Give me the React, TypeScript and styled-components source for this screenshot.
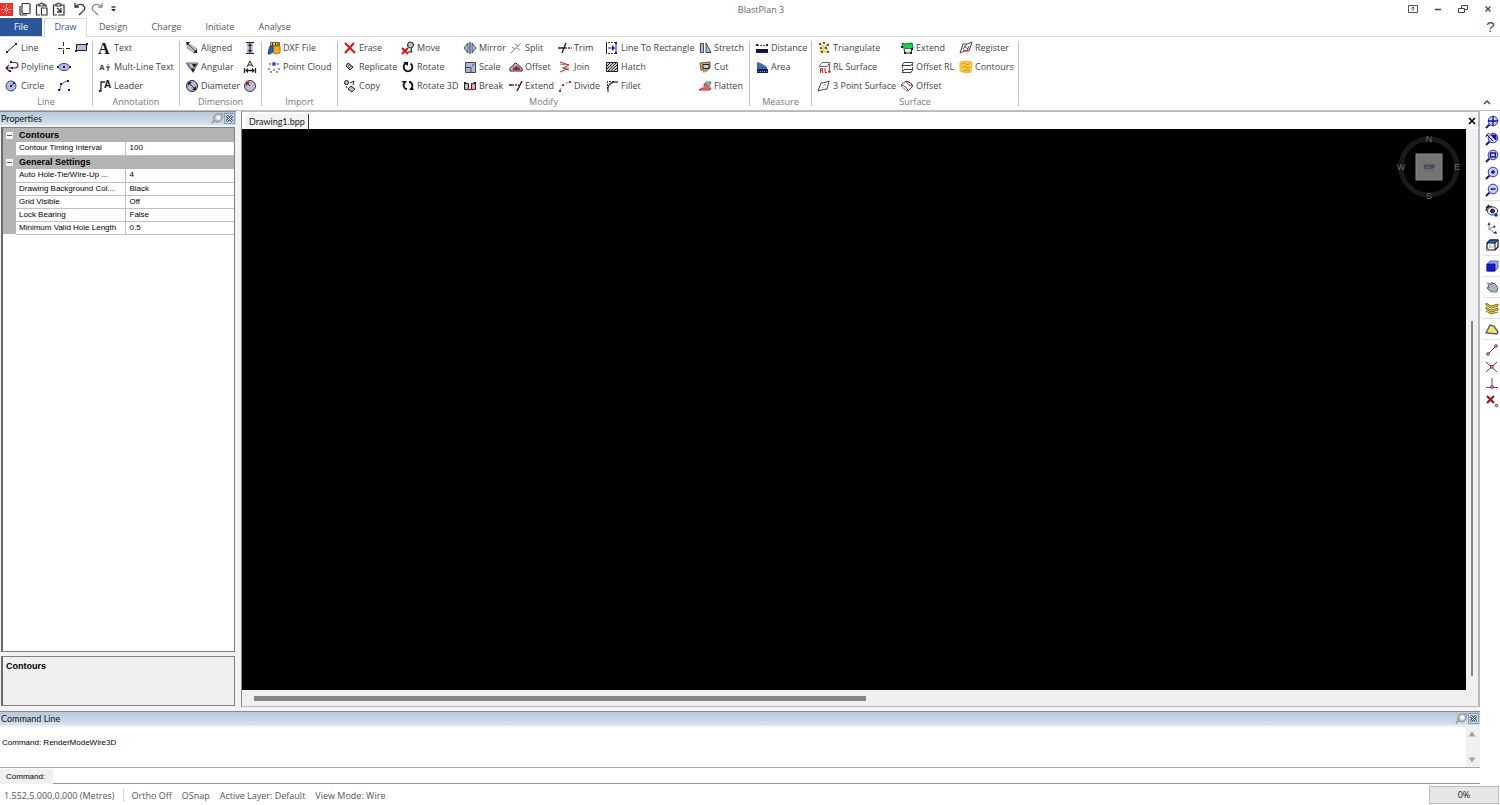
import React from 'react';
import styled, { createGlobalStyle, css } from 'styled-components';

const uiFont = '"Open Sans", "Noto Sans", sans-serif';
const captionFont = 'Lato, "Liberation Sans", sans-serif';
const classicFont = '"Liberation Sans", sans-serif';

const GlobalStyle = createGlobalStyle`
  *, *::before, *::after { box-sizing: border-box; }
  body { margin: 0; background: #fff; font-family: ${uiFont}; font-size: 9px; color: #444; }
  button, input { font: inherit; color: inherit; }
`;

const plainButton = css`
  background: none;
  border: 0;
  padding: 0;
  margin: 0;
`;

const Window = styled.div`
  display: flex;
  flex-direction: column;
  min-height: 100vh;
`;

const TitleBar = styled.header`
  display: flex;
  align-items: center;
  height: 18px;
`;

const QuickTools = styled.div`
  display: flex;
  flex: 1;
  align-items: center;
`;

const QuickButton = styled.button`
  ${plainButton}
  display: grid;
  place-items: center;
  width: 17px;
  height: 18px;
`;

const LogoBox = styled.span`
  display: flex;
  width: 16px;
`;

const UndoGroup = styled.div`
  display: flex;
  margin-left: 4px;
`;

const AppTitle = styled.h1`
  margin: 0 0 0 22px;
  font-size: 9px;
  font-weight: 400;
  color: #666;
`;

const WindowButtons = styled.div`
  display: flex;
  flex: 1;
  justify-content: flex-end;
`;

const WindowButton = styled.button`
  ${plainButton}
  display: grid;
  place-items: center;
  width: 25px;
  height: 18px;
`;

const TabRow = styled.nav`
  display: flex;
  height: 18px;
  line-height: 18px;
`;

const FileTab = styled.button`
  ${plainButton}
  width: 42px;
  margin-right: 2px;
  background: #2b579a;
  color: #fff;
`;

const RibbonTab = styled.button<{ $active?: boolean }>`
  ${plainButton}
  height: ${(p) => (p.$active ? '19px' : '18px')};
  width: ${(p) => (p.$active ? '43px' : 'auto')};
  padding: ${(p) => (p.$active ? '0 0 2px' : '0 12px')};
  border: ${(p) => (p.$active ? '1px solid #dadada' : '0')};
  border-bottom: 0;
  background: #fff;
  color: ${(p) => (p.$active ? '#2b579a' : '#555')};
  line-height: ${(p) => (p.$active ? '16px' : '18px')};
  z-index: 1;
`;

const HelpButton = styled.button`
  ${plainButton}
  width: 19px;
  margin-left: auto;
  font-family: ${classicFont};
  font-size: 15px;
  line-height: 18px;
`;

const Ribbon = styled.section`
  display: flex;
  height: 75px;
  padding-top: 1px;
  border-top: 1px solid #dadada;
  border-bottom: 1px solid #c0c0c0;
`;

const Group = styled.div`
  display: flex;
  flex-direction: column;
  flex: none;
  padding-left: 5px;
`;

const GroupGrid = styled.div<{ $columns: string }>`
  display: grid;
  grid-template-columns: ${(p) => p.$columns};
  grid-template-rows: repeat(3, 19px);
  grid-auto-flow: column;
`;

const GroupName = styled.div`
  margin-left: -5px;
  line-height: 13px;
  text-align: center;
  color: #777;
`;

const Divider = styled.i`
  width: 1px;
  height: 65px;
  margin-top: 3px;
  background: #b4c6e0;
`;

const Command = styled.button`
  ${plainButton}
  display: flex;
  align-items: center;
  gap: 2px;
  white-space: nowrap;
  text-align: left;
`;

const CollapseButton = styled.button`
  ${plainButton}
  align-self: flex-end;
  margin-left: auto;
  width: 26px;
  height: 15px;
`;

const Body = styled.div`
  display: flex;
  flex: 1;
`;

const Desk = styled.div`
  display: flex;
  flex: 1;
  flex-direction: column;
  min-width: 0;
`;

const Workspace = styled.main`
  display: flex;
  flex: 1;
  gap: 5px;
  padding-bottom: 4px;
  background: #f3f3f3;
`;

const Properties = styled.aside`
  display: flex;
  flex-direction: column;
  width: 236px;
  color: #000;
`;

const PaneHeader = styled.div`
  display: flex;
  align-items: center;
  height: 14px;
  padding-left: 1px;
  border-top: 1px solid #8a8a8a;
  background: linear-gradient(#b9c9d8, #d5e1f0);
  font-family: ${captionFont};
  line-height: 12px;
  color: #111;
`;

const PaneTitle = styled.h2`
  flex: 1;
  margin: 0;
  font-size: 9px;
  font-weight: 400;
`;

const PaneButton = styled.button`
  ${plainButton}
  display: grid;
  place-items: center;
  width: 13px;
  height: 13px;
`;

const GridFrame = styled.div`
  flex: 1;
  margin: 2px 1px 4px 1px;
  border: 1px solid #808080;
  border-left: 2px solid #696969;
  background: #fff;
`;

const PropertyTable = styled.table`
  width: 100%;
  border-collapse: collapse;
  table-layout: fixed;
  font-family: ${classicFont};
  font-size: 8px;
  line-height: 12px;
`;

const Gutter = styled.td`
  width: 13px;
  padding: 0;
  background: #b4b4b4;
  vertical-align: middle;
`;

const Category = styled.th`
  height: 14px;
  padding: 0 3px;
  background: #b4b4b4;
  font-size: 9px;
  text-align: left;
`;

const PropertyName = styled.th`
  height: 13px;
  padding: 0 0 0 3px;
  border-right: 1px solid #c0c0c0;
  border-bottom: 1px solid #c0c0c0;
  font-weight: 400;
  text-align: left;
  white-space: nowrap;
`;

const PropertyValue = styled.td`
  padding: 0 4px;
  border-bottom: 1px solid #c0c0c0;
`;

const ExpandButton = styled.button`
  ${plainButton}
  display: block;
  width: 7px;
  height: 7px;
  margin-left: 3px;
  background: linear-gradient(#3a5a9a, #3a5a9a) center / 5px 1px no-repeat #f4f4f4;
`;

const Description = styled.div`
  height: 50px;
  margin: 0 1px 1px;
  padding: 4px 3px;
  border: 1px solid #808080;
  border-left: 2px solid #696969;
  background: #f0f0f0;
  font-family: ${classicFont};
  font-weight: 700;
`;

const Document = styled.section`
  display: flex;
  flex: 1;
  flex-direction: column;
  min-width: 0;
  border: 1px solid #b8b8b8;
  border-right-width: 2px;
  border-left: 1px solid #888;
  background: #fff;
`;

const DocumentTabs = styled.div`
  display: flex;
  align-items: flex-end;
  height: 17px;
  padding-left: 4px;
`;

const DocumentTab = styled.button`
  ${plainButton}
  height: 15px;
  padding: 0 3px;
  border-right: 1px solid #333;
  background: #f3f3f3;
  font-family: ${captionFont};
  color: #222;
`;

const DocumentClose = styled.button`
  ${plainButton}
  display: grid;
  place-items: center;
  width: 12px;
  height: 17px;
  margin-left: auto;
`;

const CanvasRow = styled.div`
  display: flex;
  flex: 1;
`;

const Canvas = styled.div`
  position: relative;
  flex: 1;
  background: #000;
`;

const Compass = styled.svg`
  position: absolute;
  top: 4px;
  right: 4px;
`;

const VerticalBar = styled.div`
  display: grid;
  grid-template-rows: 342fr 633fr 25fr;
  width: 12px;
  background: #f0f0f0;
`;

const VerticalThumb = styled.i`
  grid-row: 2;
  justify-self: center;
  width: 2px;
  background: #858585;
`;

const HorizontalBar = styled.div`
  display: grid;
  grid-template-columns: 10fr 495fr 495fr;
  height: 16px;
  background: #f0f0f0;
`;

const HorizontalThumb = styled.i`
  grid-column: 2;
  align-self: center;
  height: 5px;
  background: #858585;
`;

const CommandPane = styled.section`
  font-family: ${classicFont};
  color: #000;
`;

const Output = styled.div`
  display: flex;
  height: 43px;
  border-top: 2px solid #f0f0f0;
  border-bottom: 1px solid #a8a8a8;
`;

const OutputText = styled.p`
  flex: 1;
  margin: 0;
  padding: 10px 2px;
  font-size: 8px;
  line-height: 12px;
`;

const OutputScroll = styled.div`
  display: flex;
  flex-direction: column;
  justify-content: space-between;
  width: 14px;
  background: #f0f0f0;
`;

const ArrowButton = styled.button`
  ${plainButton}
  display: grid;
  place-items: center;
  width: 12px;
  height: 14px;
`;

const Prompt = styled.div`
  display: flex;
  height: 15px;
  margin: 1px 0;
  font-size: 8px;
  line-height: 15px;
`;

const PromptLabel = styled.label`
  width: 53px;
  padding-left: 6px;
  background: #f0f0f0;
`;

const PromptInput = styled.input`
  flex: 1;
  min-width: 0;
  border: 0;
  border-bottom: 1px solid #999;
  padding: 0 4px;
  background: #fff;
  outline: 0;
`;

const SideTools = styled.aside`
  display: flex;
  flex-direction: column;
  width: 20px;
  padding: 2px 0 0 3px;
`;

const SideSet = styled.div`
  display: flex;
  flex-direction: column;

  & + & {
    margin-top: 2px;
    padding-top: 1px;
    border-top: 1px solid #e2e2e2;
  }
`;

const SideButton = styled.button`
  ${plainButton}
  display: grid;
  place-items: center;
  height: 17px;
`;

const StatusBar = styled.footer`
  display: flex;
  align-items: center;
  height: 20px;
  padding: 0 1px 0 4px;
  color: #555;
`;

const StatusItem = styled.span<{ $divided?: boolean }>`
  padding-right: ${(p) => (p.$divided ? '8px' : '0')};
  margin-right: ${(p) => (p.$divided ? '8px' : '10px')};
  border-right: ${(p) => (p.$divided ? '1px solid #d4d4d4' : '0')};
`;

const Progress = styled.div`
  width: 70px;
  height: 18px;
  margin-left: auto;
  border: 1px solid #bcbcbc;
  background: #e6e6e6;
  line-height: 16px;
  text-align: center;
  color: #222;
`;

const K = '#222';
const B = '#1212c8';
const F = '#b4bedb';
const R = '#d42020';

const Dots = ({ at, c = B }: { at: number[][]; c?: string }) => (
  <>
    {at.map(([x, y]) => (
      <rect key={`${x}-${y}`} x={x - 1} y={y - 1} width="2" height="2" fill={c} stroke="none" />
    ))}
  </>
);

const Lens = () => (
  <>
    <path d="M1 13 4.500 9.500" stroke="#12129a" strokeWidth="2" />
    <circle cx="8" cy="6" r="4.800" fill="#c5cff0" stroke="#3a3aa8" />
  </>
);

const art: Record<string, React.ReactNode> = {
  line: <><path d="M2 11 11 3" stroke={K} /><Dots at={[[2, 11], [11, 3]]} /></>,
  polyline: <><path d="M6 2.500h4q3 0 3 2.500t-3 3H2" stroke="#7a2730" strokeWidth="1.200" /><path d="m4 5-3 3 3 3" stroke="#7a2730" strokeWidth="1.200" /><Dots at={[[6, 2], [2, 8], [7, 8], [5, 11]]} /></>,
  circle: <><circle cx="6" cy="7" r="5" fill={F} stroke="#445" /><path d="m6 7 3-3" stroke={K} /><Dots at={[[6, 7], [9, 4]]} /></>,
  point: <path d="M6.500 1v4M6.500 9v4M1 7.500h4M9 7.500h4M6.500 7v1" stroke={K} />,
  rectangle: <><path d="M1.500 3.500h10v6h-10z" fill={F} stroke={K} /><Dots at={[[1, 10], [12, 3]]} /></>,
  ellipse: <><ellipse cx="7" cy="7" rx="5.500" ry="3.500" fill={F} stroke="#446" /><Dots at={[[7, 7], [1, 7], [13, 7]]} /></>,
  arc: <><path d="M3 11Q3 4 10 2" stroke="#555" /><Dots at={[[2, 11], [4, 5], [11, 2], [12, 11]]} /></>,
  text: <text x="0" y="12.500" fontFamily="Liberation Serif, serif" fontWeight="700" fontSize="16" fill="#111">A</text>,
  mtext: <><text x="1" y="10" fontFamily="Liberation Sans, sans-serif" fontWeight="700" fontSize="8" fill="#333">A</text><path d="M10 4v1M10 6v5M8 7h4" stroke={K} /></>,
  leader: <><text x="6" y="9" fontFamily="Liberation Sans, sans-serif" fontWeight="700" fontSize="10" fill="#111">A</text><path d="M1 12h2V3h4M1.500 11v2" stroke={K} strokeWidth="1.300" /></>,
  aligned: <><path d="m4 3 8 5-2 4-8-5z" fill={F} stroke="#99a" /><path d="m3 3 8 8" stroke="#555" /><path d="M1 1h4L2 5zM12 12H8l4-4z" fill={K} stroke="none" /></>,
  angular: <><path d="M1 3h12L8 12z" fill={F} stroke="#666" /><path d="M3 4q1 4 5 6" stroke="#555" /><path d="M7 4h5L9 8zM6 8l4 1-2 4z" fill={K} stroke="none" /></>,
  diameter: <><circle cx="7" cy="7" r="5.500" fill={F} stroke={K} /><path d="m4 4 6 6" stroke={K} /><path d="M3 3h4L3 7zM11 11H7l4-4z" fill={K} stroke="none" /></>,
  vertical: <><path d="M4 2h6v10H4z" fill={F} stroke="none" /><path d="M3 1.500h8M3 12.500h8M7 3v8" stroke={K} /><path d="m7 2 2 3H5zM7 12 5 9h4z" fill={K} stroke="none" /></>,
  baseline: <><path d="m4 7 3-6 3 6M5 5h4" stroke={K} /><path d="M1.500 8v5M12.500 8v5M4 10.500h6" stroke={K} strokeWidth="1.300" /><path d="m2 10.500 3-2.500v5zM12 10.500l-3-2.500v5z" fill={K} stroke="none" /></>,
  radius: <><circle cx="7" cy="7" r="5.500" fill={F} stroke="#6b2b30" /><path d="m7 7-3-3" stroke={K} /><path d="M3 3h4L3 7z" fill="#822" stroke="none" /></>,
  dxf: <><path d="M6 5h7v7l-6 1z" fill="#f0a81f" stroke="#b97b14" /><path d="M3.500 1.500h9v3h-9z" fill="#ffd24a" stroke="#8c651d" /><path d="M5 3h1M8 3h1M10.500 3h1" stroke={K} strokeWidth="2" /><path d="M3 5h3v6l-3 2H1l1-5z" fill="#2764ad" stroke="#23497a" /></>,
  cloud: <><Dots c="#999ca8" at={[[3, 4], [11, 4], [2, 9], [12, 9], [4, 12], [10, 12], [7, 10]]} /><circle cx="7" cy="4" r="2" fill="#3b4ed8" stroke="none" /></>,
  erase: <path d="m2 2 10 10M11 2 2 12" stroke="#e21010" strokeWidth="2" />,
  replicate: <><path d="m5 3 5 4-3 3-4-4z" fill={F} stroke={K} /><circle cx="6.500" cy="6.500" r="1" fill="#fff" stroke="#556" /></>,
  copy: <><circle cx="3.500" cy="3.500" r="2" fill={F} stroke={K} /><path d="m8 7 4 3-3 3-4-3z" fill={F} stroke={K} /><path d="m3 7 1 2M7 4l4-2-1 4" stroke={K} /></>,
  move: <><circle cx="9.500" cy="4" r="3" fill={F} stroke={K} /><path d="m10 7 1 4H7" fill={F} stroke={K} /><path d="m1 7 6 6M7 7l-6 6" stroke="#e21010" strokeWidth="2" /></>,
  rotate: <><path d="M4.500 3.500a4.300 4.300 0 1 0 5 0" stroke="#111" strokeWidth="1.800" /><path d="M2 2h5v4z" fill="#111" stroke="none" /></>,
  rotate3d: <><path d="M6 10Q2.500 10 2.500 5M8 3q3.500 0 3.500 5" stroke="#111" strokeWidth="1.800" /><path d="M1 2h5L3 6zM13 11H8l3-4z" fill="#111" stroke="none" /></>,
  mirror: <><path d="M5 2v10L1 7zM9 2v10l4-5z" fill={F} stroke="#446" /><path d="M7 1v12" stroke="#1f5e7c" strokeWidth="1.400" /></>,
  scale: <><path d="M2.500 2.500h10v10h-10z" fill="#a9b6d9" stroke="#445" /><path d="M3 7.500h5V12M9 6l2-2" stroke="#445" /></>,
  break: <><path d="M1.500 4.500h4v6h-4zM8.500 4.500h4v6h-4z" fill={F} stroke={K} /><path d="M4 4.500h1.500M8.500 4.500H10M4 10.500h6" stroke={R} strokeWidth="1.300" /><Dots at={[[2, 4], [12, 4]]} c={K} /></>,
  split: <><path d="m2 12 10-10" stroke="#888" /><path d="m3 6 3 2M8 7l3 2M6 3l3 2" stroke="#e06060" /></>,
  offset: <><path d="M1 11q-1-4 3-5 2-6 6 0 4 1 3 5z" fill={F} stroke="#3d2025" /><path d="M4 9.500q0-2 2-2 1-3 3 0 2 0 2 2z" fill="#444" stroke={R} /></>,
  extend: <><path d="M3 6h7" stroke="#a01818" strokeWidth="1.600" strokeDasharray="2 1" /><path d="M0 6h3M8 12l5-10" stroke={K} strokeWidth="1.400" /></>,
  trim: <><path d="M0 7h7M4 12 8 2" stroke={K} strokeWidth="1.400" /><path d="M7 7h7" stroke="#a01818" strokeWidth="1.600" strokeDasharray="2 1" /></>,
  join: <><path d="m2 2 9 3-6 3 6 2M2 12l7-3" stroke={R} /><path d="m2 4 7 1M4 8h7" stroke="#777" /></>,
  divide: <><path d="M2 12Q3 5 12 3" stroke="#d66" strokeDasharray="3 2" /><Dots c={R} at={[[2, 12], [5, 6], [12, 3]]} /></>,
  toRectangle: <><path d="M1.500 1v12" stroke={K} /><path d="M3 1.500h8M3 12.500h8" stroke="#445" strokeDasharray="2 1" /><path d="M3 7h6M11 1v12" stroke={B} /><path d="M7 4v6l3-3z" fill={B} stroke="none" /><Dots at={[[11, 2], [11, 12]]} /></>,
  hatch: <><path d="M1.500 2.500h11v9h-11z" fill="#ccc" stroke={K} /><path d="m2 6 4-4M2 9l7-7M3 11l9-9M6 11l6-6M9 11l3-3" stroke={K} /></>,
  fillet: <><path d="M3 13V9Q4 4 9 3h4" stroke="#445" strokeWidth="1.300" /><path d="M2.500 10V2.500H9" stroke={K} strokeDasharray="2 1" /></>,
  stretch: <path d="M2.500 2.500h3v9h-3zM8 2l5 9.500H8z" fill={F} stroke="#446" />,
  cut: <><path d="m2 3 10-1v6l-4 3-5-1z" fill="#e0a04e" stroke="#755" /><path d="M5 4.500h6v4H5z" fill="#ccd" stroke={K} /><path d="m5 12 5-2" stroke="#a99" strokeWidth="2" /></>,
  flatten: <><path d="m6 5 2-2h5l-2 5H6z" fill="#aaa" stroke="#777" /><path d="M1 11h11l1-2H4z" fill="#d99" stroke={R} /><path d="M6 6h4" stroke={R} /></>,
  distance: <><path d="M1 8h12v4H1z" fill="#101050" stroke="none" /><path d="M1 11.500h12" stroke={B} /><path d="M2 4.500h10" stroke={R} strokeDasharray="2 1" /><Dots c={K} at={[[2, 4], [12, 4]]} /></>,
  area: <><path d="M2 2q3 0 10 5v2H2z" fill="#3e6ba5" stroke="none" /><path d="M2 9h11v4H2z" fill="#15156e" stroke="none" /><path d="M3 11.500h9" stroke="#8c9ade" strokeDasharray="1 1" /></>,
  triangulate: <><path d="m3 3 5 3 4-4M4 10l4-4 3 5z" stroke="#e8d24a" strokeWidth="1.800" /><Dots c="#555" at={[[3, 3], [7, 2], [11, 4], [4, 7], [9, 7], [11, 11], [5, 11]]} /></>,
  rl: <><path d="M5 2.500h8l-3 4H2z" stroke="#666" /><path d="M3.500 13V8.500h2v2h-2M5 10.500l1 2.500M8 8v4.500h2M12.500 4v9M11 11l1.500 2 1-2" stroke={R} /></>,
  threePoint: <><path d="m1 12 3-8q4 0 8-2l-2 8q-3 0-9 2z" stroke="#444" /><path d="m5 9 3-4 1 3" stroke="#e06060" strokeDasharray="1 1" /></>,
  surfaceExtend: <><path d="m2 2 3 1 7-1 1 5-3 1-7-1z" fill="#20cf50" stroke="#087832" /><path d="m4 8 1 4h6l1-4" fill="#e4f2e5" stroke={K} /><Dots c={K} at={[[2, 6], [12, 8], [5, 12], [11, 12]]} /></>,
  offsetRl: <><path d="M4 2.500h9l-2 3H2zM4 9.500h9l-2 3H2z" stroke="#444" /><path d="M2.500 6v6M12.500 4v6" stroke={R} strokeDasharray="2 1" /></>,
  surfaceOffset: <><path d="m1 6 5-4q5 1 7 5l-5 5q-1-5-7-6zM6 2q2 5 7 5" stroke="#444" /><path d="m1 7 7 6M8 2l5 4" stroke={R} strokeDasharray="2 1" /></>,
  register: <><path d="m1 12 3-9q4 1 9-2l-3 9q-4-1-9 2z" stroke="#444" /><path d="m4 9 4 1 2-5" stroke={R} /><path d="m5 5 4 3M4 8l4-5" stroke="#4444c8" /></>,
  contours: <><path d="m1 2 6-1 6 1-1 10-5 1-6-2z" fill="#f6cf3e" stroke="#edbd2c" /><path d="M3 4q2-2 4 0t4-1M3 8q2-3 4-1t4 0M4 11q3-2 7 0" stroke="#e48a1a" /></>,
  zoomAll: <><Lens /><path d="M8 1v10M3 6h10" stroke="#12129a" strokeWidth="1.300" /></>,
  zoomPrevious: <><Lens /><path d="M6 3h5v5z" fill="#12129a" stroke="#12129a" /><path d="m2 3 6 6M1 5q0-3 3-4" stroke="#12129a" /></>,
  zoomWindow: <><Lens /><path d="M5.500 4h5v4h-5z" stroke="#12129a" strokeWidth="1.300" /></>,
  zoomIn: <><Lens /><path d="M8 4v4M6 6h4" stroke="#12129a" strokeWidth="1.500" /></>,
  zoomOut: <><Lens /><path d="M5.500 6h5" stroke="#12129a" strokeWidth="1.500" /></>,
  orbit: <><path d="M1 7Q2 2 7 2.500M4 1 1 4" stroke={K} strokeWidth="1.200" /><ellipse cx="7.500" cy="7" rx="5" ry="4" fill="#fff" stroke="#333" /><circle cx="7.500" cy="7" r="2" fill="#1637a8" stroke="#113" /><circle cx="11" cy="11" r="1.800" fill="#1637a8" /></>,
  axes: <><path d="M4 3v5l6 4M4 8l4-2" stroke="#888" /><path d="m2.500 4 1.500-3 1.500 3zM8 7l1-3 2 2zM8 12l3-2 1 3z" fill="#252590" stroke="none" /></>,
  wireCube: <><path d="m2 5 3-3h8v7l-3 3H2z" fill="#fff" stroke="#111" strokeWidth="1.200" /><path d="m2 5 3-3h8l-3 3z" fill="#1672d8" stroke="#111" /><path d="M10 5v7" stroke="#111" /><path d="M5 5v4L2 12M5 9h5" stroke="#aac" /></>,
  solidCube: <><path d="m2 5 3-3h8v7l-3 3H2z" fill="#9aaaf0" stroke="#5568d0" /><path d="M2 5h8v7H2z" fill="#1717cf" stroke="#1515a0" /></>,
  hand: <><path d="M5 11 2 8q0-2 2 0L3 4q1-2 3 1V3q1-2 2 1l1-1 2 2q3 2 1 6l-1 1z" fill="#a8b5c3" stroke="#667" /><path d="M1 3h3M5 12h8" stroke="#99a5b0" /></>,
  layers: <path d="m1 2 5 3 7-2v2L6 7 1 4zM1 6l5 3 7-2v2l-7 2-5-3zM1 10l5 3 7-2" fill="#f4cf30" stroke="#8a7420" />,
  polygon: <path d="m1 11 4-8 4 1 4 6-1 2z" fill="#f1e65c" stroke="#4b5b85" strokeWidth="1.400" />,
  snapEnd: <><path d="m3 11 8-8" stroke="#444" /><circle cx="3" cy="11" r="1.300" fill="#fbb" stroke="#a23" /><circle cx="11" cy="3" r="1.300" fill="#fbb" stroke="#a23" /></>,
  snapCross: <><path d="m1 2 11 10M12 2 1 12" stroke="#444" /><rect x="5.500" y="5.500" width="2.500" height="2.500" fill="#fbb" stroke="#a23" /></>,
  snapPerp: <><path d="M7 1v10M1 10.500h12" stroke="#555" /><circle cx="7" cy="10" r="1.400" fill="#fbb" stroke="#a23" /></>,
  snapOff: <><path d="m2 2 7 7M9 2 2 9" stroke="#a01515" strokeWidth="2.200" /><circle cx="11.500" cy="11.500" r="1.300" fill="#bbb" stroke="#555" /></>,
  copyDoc: <path d="M5 1.500h6q1 0 1 1v8q0 1-1 1H5q-1 0-1-1v-8q0-1 1-1zM2 4v8q0 1 1 1h6" stroke="#333" strokeWidth="1.200" />,
  paste: <path d="M4 3H1.500v10H5M9 3h2v2M4 4V2h1.500q1-2 2 0H9v2zM6.500 6H12v7H6.500z" stroke="#333" strokeWidth="1.200" />,
  pasteSpecial: <><path d="M4 3H1.500v10H5M9 3h3v10H6M4 4V2h1.500q1-2 2 0H9v2z" stroke="#333" strokeWidth="1.200" /><path d="m5 6 4 4M9 6v4H5" stroke="#333" strokeWidth="1.300" /></>,
  undo: <path d="M2 1v4h4M2 5q4-4 8-2 4 4-1 7l-3 3" stroke="#333" strokeWidth="1.300" />,
  redo: <path d="M12 1v4H8M12 5Q8 1 4 3 0 7 5 10l3 3" stroke="#8a8a8a" strokeWidth="1.300" />,
  customise: <><path d="M4.500 5h4" stroke={K} strokeWidth="1.300" /><path d="M4 7h5L6.500 9.500z" fill={K} stroke="none" /></>,
  logo: <><path d="M0 0h14v14H0z" fill="#e9322c" stroke="none" /><path d="M7 1v12M1 7h12M3 3l8 8M11 3l-8 8" stroke="#ffd5d0" strokeDasharray="2 1" /><circle cx="7" cy="7" r="1" fill="#e9322c" /></>,
  ribbonMode: <path d="M2.500 3.500h9v7h-9zM7 9V5M5.500 6.500 7 5l1.500 1.500" stroke="#555" />,
  minimise: <path d="M4 7.500h6" stroke="#444" strokeWidth="1.500" />,
  restore: <path d="M2.500 6.500h6v4h-6zM5.500 6V3.500h6v4H9" stroke="#444" />,
  close: <path d="m4.500 4.500 5 5M9.500 4.500l-5 5" stroke="#444" strokeWidth="1.300" />,
  closeBold: <path d="m3.500 3.500 7 7M10.500 3.500l-7 7" stroke="#000" strokeWidth="2" />,
  collapse: <path d="m4 9 3-3 3 3" stroke="#444" strokeWidth="1.400" />,
  pin: <><path d="m2 12 3-3" stroke="#888" strokeWidth="1.500" /><path d="M4 5q1-3 5-3h4v5q-1 4-5 4l-4-2z" fill="#bbb" stroke="#8a8a8a" /><circle cx="9" cy="6" r="2.500" fill="#f5f5f5" stroke="none" /></>,
  paneClose: <><path d="M1.500 1.500h11v11h-11z" fill="#c3d5ee" stroke="#8194ae" /><path d="m4 4 6 6M10 4l-6 6" stroke="#4d5968" strokeWidth="3" /><path d="m4 4 6 6M10 4l-6 6" stroke="#fff" strokeWidth="1" /></>,
  up: <path d="m3 10 4-6 4 6z" fill="#a0a0a0" stroke="none" />,
  down: <path d="m3 4 4 6 4-6z" fill="#a0a0a0" stroke="none" />,
};

const Icon = ({ name, size = 14 }: { name: string; size?: number }) => (
  <svg width={size} height={size} viewBox="0 0 14 14" fill="none" aria-hidden="true">
    {art[name]}
  </svg>
);

type Entry = [icon: string, label: string, iconOnly?: boolean];

const groups: { name: string; columns: string; items: Entry[] }[] = [
  {
    name: 'Line',
    columns: '52px 18px 17px',
    items: [
      ['line', 'Line'], ['polyline', 'Polyline'], ['circle', 'Circle'],
      ['point', 'Point', true], ['ellipse', 'Ellipse', true], ['arc', 'Arc', true],
      ['rectangle', 'Rectangle', true],
    ],
  },
  {
    name: 'Annotation',
    columns: '81px',
    items: [['text', 'Text'], ['mtext', 'Mult-Line Text'], ['leader', 'Leader']],
  },
  {
    name: 'Dimension',
    columns: '58px 18px',
    items: [
      ['aligned', 'Aligned'], ['angular', 'Angular'], ['diameter', 'Diameter'],
      ['vertical', 'Vertical', true], ['baseline', 'Baseline', true], ['radius', 'Radius', true],
    ],
  },
  { name: 'Import', columns: '70px', items: [['dxf', 'DXF File'], ['cloud', 'Point Cloud']] },
  {
    name: 'Modify',
    columns: '58px 62px 46px 49px 47px 93px 51px',
    items: [
      ['erase', 'Erase'], ['replicate', 'Replicate'], ['copy', 'Copy'],
      ['move', 'Move'], ['rotate', 'Rotate'], ['rotate3d', 'Rotate 3D'],
      ['mirror', 'Mirror'], ['scale', 'Scale'], ['break', 'Break'],
      ['split', 'Split'], ['offset', 'Offset'], ['extend', 'Extend'],
      ['trim', 'Trim'], ['join', 'Join'], ['divide', 'Divide'],
      ['toRectangle', 'Line To Rectangle'], ['hatch', 'Hatch'], ['fillet', 'Fillet'],
      ['stretch', 'Stretch'], ['cut', 'Cut'], ['flatten', 'Flatten'],
    ],
  },
  { name: 'Measure', columns: '56px', items: [['distance', 'Distance'], ['area', 'Area']] },
  {
    name: 'Surface',
    columns: '83px 59px 59px',
    items: [
      ['triangulate', 'Triangulate'], ['rl', 'RL Surface'], ['threePoint', '3 Point Surface'],
      ['surfaceExtend', 'Extend'], ['offsetRl', 'Offset RL'], ['surfaceOffset', 'Offset'],
      ['register', 'Register'], ['contours', 'Contours'],
    ],
  },
];

const settings = [
  { name: 'Contours', rows: [['Contour Timing Interval', '100']] },
  {
    name: 'General Settings',
    rows: [
      ['Auto Hole-Tie/Wire-Up ...', '4'],
      ['Drawing Background Col...', 'Black'],
      ['Grid Visible', 'Off'],
      ['Lock Bearing', 'False'],
      ['Minimum Valid Hole Length', '0.5'],
    ],
  },
];

const sideSets: [icon: string, label: string][][] = [
  [
    ['zoomAll', 'Zoom all'], ['zoomPrevious', 'Zoom previous'], ['zoomWindow', 'Zoom window'],
    ['zoomIn', 'Zoom in'], ['zoomOut', 'Zoom out'],
  ],
  [['orbit', 'Orbit'], ['axes', 'Axes'], ['wireCube', 'Wireframe']],
  [['solidCube', 'Solid']],
  [['hand', 'Pan']],
  [['layers', 'Layers']],
  [['polygon', 'Polygon']],
  [
    ['snapEnd', 'Snap to end'], ['snapCross', 'Snap to intersection'],
    ['snapPerp', 'Snap to perpendicular'], ['snapOff', 'Snap off'],
  ],
];

const PaneTop = ({ title }: { title: string }) => (
  <PaneHeader>
    <PaneTitle>{title}</PaneTitle>
    <PaneButton aria-label={`Pin ${title}`}><Icon name="pin" size={13} /></PaneButton>
    <PaneButton aria-label={`Close ${title}`}><Icon name="paneClose" size={13} /></PaneButton>
  </PaneHeader>
);

const ViewCompass = () => (
  <Compass width="66" height="68" viewBox="0 0 66 68" aria-hidden="true">
    <circle cx="33" cy="34" r="28" fill="none" stroke="#1a1a1a" strokeWidth="5" />
    <rect x="20" y="21" width="26" height="26" fill="#747474" stroke="#8a8a8a" />
    <rect x="28" y="30" width="10" height="8" fill="#666b70" />
    <text x="33" y="36" textAnchor="middle" fontSize="6" fontFamily="Liberation Sans, sans-serif" fill="#222">TOP</text>
    <g fontFamily="Liberation Sans, sans-serif" fontSize="9" fill="#6a6a6a" textAnchor="middle">
      <text x="33" y="9">N</text>
      <text x="61" y="37">E</text>
      <text x="33" y="66">S</text>
      <text x="5" y="37">W</text>
    </g>
  </Compass>
);

export default function App() {
  return (
    <Window>
      <GlobalStyle />
      <TitleBar>
        <QuickTools>
          <LogoBox><Icon name="logo" size={13} /></LogoBox>
          <QuickButton aria-label="Copy"><Icon name="copyDoc" /></QuickButton>
          <QuickButton aria-label="Paste"><Icon name="paste" /></QuickButton>
          <QuickButton aria-label="Paste special"><Icon name="pasteSpecial" /></QuickButton>
          <UndoGroup>
            <QuickButton aria-label="Undo"><Icon name="undo" /></QuickButton>
            <QuickButton aria-label="Redo"><Icon name="redo" /></QuickButton>
            <QuickButton aria-label="Customise toolbar"><Icon name="customise" /></QuickButton>
          </UndoGroup>
        </QuickTools>
        <AppTitle>BlastPlan 3</AppTitle>
        <WindowButtons>
          <WindowButton aria-label="Ribbon display"><Icon name="ribbonMode" /></WindowButton>
          <WindowButton aria-label="Minimise"><Icon name="minimise" /></WindowButton>
          <WindowButton aria-label="Restore"><Icon name="restore" /></WindowButton>
          <WindowButton aria-label="Close"><Icon name="close" /></WindowButton>
        </WindowButtons>
      </TitleBar>

      <TabRow>
        <FileTab>File</FileTab>
        <RibbonTab $active>Draw</RibbonTab>
        {['Design', 'Charge', 'Initiate', 'Analyse'].map((tab) => (
          <RibbonTab key={tab}>{tab}</RibbonTab>
        ))}
        <HelpButton aria-label="Help">?</HelpButton>
      </TabRow>

      <Ribbon>
        {groups.map((group) => (
          <React.Fragment key={group.name}>
            <Group>
              <GroupGrid $columns={group.columns}>
                {group.items.map(([icon, label, iconOnly]) => (
                  <Command key={label} aria-label={label}>
                    <Icon name={icon} />
                    {!iconOnly && <span>{label}</span>}
                  </Command>
                ))}
              </GroupGrid>
              <GroupName>{group.name}</GroupName>
            </Group>
            <Divider />
          </React.Fragment>
        ))}
        <CollapseButton aria-label="Collapse ribbon"><Icon name="collapse" /></CollapseButton>
      </Ribbon>

      <Body>
        <Desk>
          <Workspace>
            <Properties>
              <PaneTop title="Properties" />
              <GridFrame>
                <PropertyTable>
                  <colgroup>
                    <col width="13" />
                    <col width="109" />
                    <col />
                  </colgroup>
                  <tbody>
                    {settings.map((section) => (
                      <React.Fragment key={section.name}>
                        <tr>
                          <Gutter><ExpandButton aria-label={`Collapse ${section.name}`} /></Gutter>
                          <Category colSpan={2}>{section.name}</Category>
                        </tr>
                        {section.rows.map(([name, value]) => (
                          <tr key={name}>
                            <Gutter />
                            <PropertyName scope="row">{name}</PropertyName>
                            <PropertyValue>{value}</PropertyValue>
                          </tr>
                        ))}
                      </React.Fragment>
                    ))}
                  </tbody>
                </PropertyTable>
              </GridFrame>
              <Description>Contours</Description>
            </Properties>

            <Document>
              <DocumentTabs>
                <DocumentTab>Drawing1.bpp</DocumentTab>
                <DocumentClose aria-label="Close drawing"><Icon name="closeBold" size={12} /></DocumentClose>
              </DocumentTabs>
              <CanvasRow>
                <Canvas><ViewCompass /></Canvas>
                <VerticalBar><VerticalThumb /></VerticalBar>
              </CanvasRow>
              <HorizontalBar><HorizontalThumb /></HorizontalBar>
            </Document>
          </Workspace>

          <CommandPane>
            <PaneTop title="Command Line" />
            <Output>
              <OutputText>Command: RenderModeWire3D</OutputText>
              <OutputScroll>
                <ArrowButton aria-label="Scroll up"><Icon name="up" size={12} /></ArrowButton>
                <ArrowButton aria-label="Scroll down"><Icon name="down" size={12} /></ArrowButton>
              </OutputScroll>
            </Output>
            <Prompt>
              <PromptLabel htmlFor="command">Command:</PromptLabel>
              <PromptInput id="command" type="text" />
            </Prompt>
          </CommandPane>
        </Desk>

        <SideTools>
          {sideSets.map((set) => (
            <SideSet key={set[0][0]}>
              {set.map(([icon, label]) => (
                <SideButton key={icon} aria-label={label}><Icon name={icon} /></SideButton>
              ))}
            </SideSet>
          ))}
        </SideTools>
      </Body>

      <StatusBar>
        <StatusItem $divided>1.552,5.000,0.000 (Metres)</StatusItem>
        <StatusItem>Ortho Off</StatusItem>
        <StatusItem>OSnap</StatusItem>
        <StatusItem>Active Layer: Default</StatusItem>
        <StatusItem>View Mode: Wire</StatusItem>
        <Progress role="progressbar" aria-valuenow={0} aria-valuemin={0} aria-valuemax={100}>0%</Progress>
      </StatusBar>
    </Window>
  );
}
